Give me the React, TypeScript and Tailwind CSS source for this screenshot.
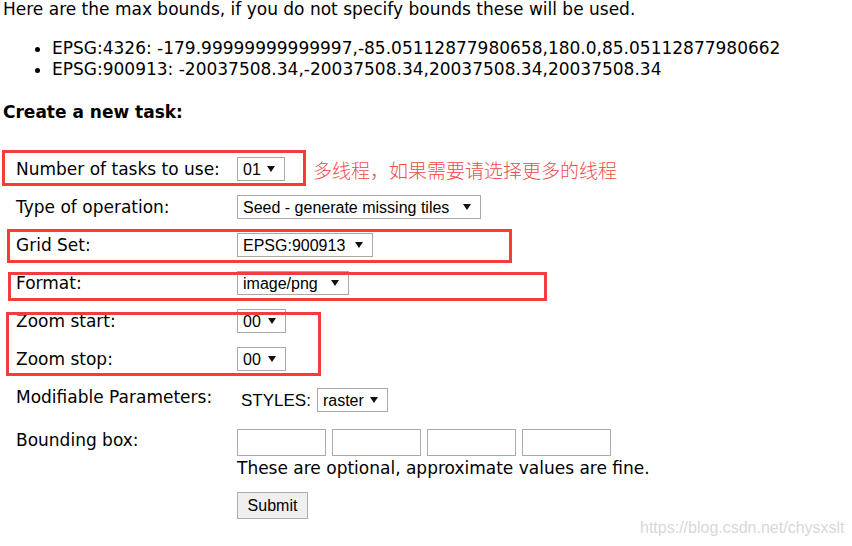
import React from 'react';

const Arrow = () => (
  <svg width="8" height="6" viewBox="0 0 8 6" className="shrink-0">
    <polygon points="0,0 8,0 4,6" fill="#111" />
  </svg>
);

function FakeSelect({ value, width }: { value: string; width: string }) {
  return (
    <div
      className={`flex h-[24px] items-center justify-between border border-[#a9a9a9] bg-white pl-[5px] pr-[9px] text-[16px] leading-[19px] text-black ${width}`}
      style={{ fontFamily: '"Liberation Sans", Arial, sans-serif' }}
    >
      <span>{value}</span>
      <Arrow />
    </div>
  );
}

function Row({ label, children }: { label: string; children: React.ReactNode }) {
  return (
    <div className="flex h-[38px] items-center">
      <div className="w-[237px] pl-[16px]">{label}</div>
      {children}
    </div>
  );
}

export default function App() {
  return (
    <div
      className="relative h-[546px] w-[852px] overflow-hidden bg-white text-[17px] leading-[19px] text-black"
      style={{ fontFamily: '"DejaVu Sans", Verdana, sans-serif' }}
    >
      <p className="pl-[3px]">Here are the max bounds, if you do not specify bounds these will be used.</p>

      <ul className="mt-[19px] list-disc pl-[52px] leading-[21px]">
        <li>EPSG:4326: -179.99999999999997,-85.05112877980658,180.0,85.05112877980662</li>
        <li>EPSG:900913: -20037508.34,-20037508.34,20037508.34,20037508.34</li>
      </ul>

      <h4 className="mt-[23px] pl-[3px] font-bold">Create a new task:</h4>

      <div className="mt-[28px]">
        <Row label="Number of tasks to use:">
          <FakeSelect value="01" width="w-[48px]" />
        </Row>
        <Row label="Type of operation:">
          <FakeSelect value="Seed - generate missing tiles" width="w-[244px]" />
        </Row>
        <Row label="Grid Set:">
          <FakeSelect value="EPSG:900913" width="w-[136px]" />
        </Row>
        <Row label="Format:">
          <FakeSelect value="image/png" width="w-[112px]" />
        </Row>
        <Row label="Zoom start:">
          <FakeSelect value="00" width="w-[49px]" />
        </Row>
        <Row label="Zoom stop:">
          <FakeSelect value="00" width="w-[49px]" />
        </Row>
        <Row label="Modifiable Parameters:">
          <div className="ml-[4px] flex items-center gap-[6px] pt-[6px]">
            <span style={{ fontFamily: '"Liberation Sans", Arial, sans-serif' }} className="text-[17px]">
              STYLES:
            </span>
            <FakeSelect value="raster" width="w-[71px]" />
          </div>
        </Row>

        <div className="flex pt-[13px]">
          <div className="w-[237px] pl-[16px] pt-[2px]">Bounding box:</div>
          <div className="flex flex-col">
            <div className="flex gap-[6px]">
              <div className="h-[27px] w-[89px] border border-[#a9a9a9]" />
              <div className="h-[27px] w-[89px] border border-[#a9a9a9]" />
              <div className="h-[27px] w-[89px] border border-[#a9a9a9]" />
              <div className="h-[27px] w-[89px] border border-[#a9a9a9]" />
            </div>
            <div className="mt-[3px]">These are optional, approximate values are fine.</div>
            <button
              className="mt-[14px] flex h-[27px] w-[71px] items-center justify-center border border-[#adadad] bg-[#efefef] text-[16px]"
              style={{ fontFamily: '"Liberation Sans", Arial, sans-serif' }}
            >
              Submit
            </button>
          </div>
        </div>
      </div>

      {/* red annotation boxes */}
      <div className="absolute left-[2px] top-[150px] h-[36px] w-[304px] border-[3px] border-[#f43c3c]" />
      <div className="absolute left-[7px] top-[229px] h-[34px] w-[505px] border-[3px] border-[#f43c3c]" />
      <div className="absolute left-[8px] top-[272px] h-[29px] w-[539px] border-[3px] border-[#f43c3c]" />
      <div className="absolute left-[6px] top-[312px] h-[64px] w-[315px] border-[3px] border-[#f43c3c]" />
      <div
        className="absolute left-[313px] top-[158px] text-[19px] font-light leading-[24px] text-[#f04a4a]"
        style={{ fontFamily: '"Noto Sans CJK SC", sans-serif' }}
      >
        多线程，如果需要请选择更多的线程
      </div>

      <div
        className="absolute left-[640px] top-[518px] text-[16px] text-[#d8d8d8]"
        style={{ fontFamily: '"Liberation Sans", Arial, sans-serif' }}
      >
        https://blog.csdn.net/chysxslt
      </div>
    </div>
  );
}
